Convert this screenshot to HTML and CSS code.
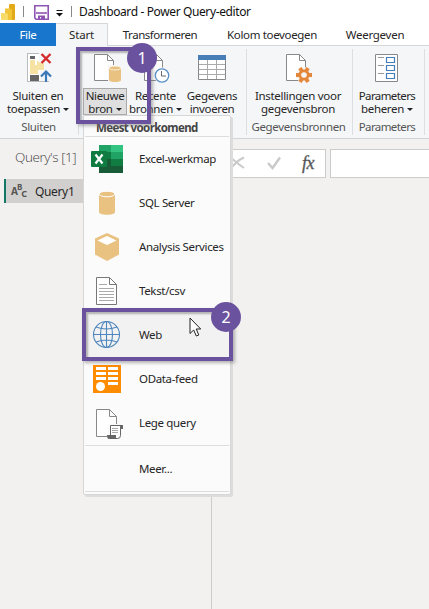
FILE: index.html
```
<!DOCTYPE html>
<html lang="nl">
<head>
<meta charset="utf-8">
<title>Dashboard - Power Query-editor</title>
<link rel="stylesheet" href="styles.css">
</head>
<body>
<div class="app">
  <header class="titlebar">
    <svg class="logo" width="16" height="18" viewBox="0 0 16 18"><rect x="8" y="1" width="6" height="16" rx="1" fill="#e2a918"/><path d="M4 5.500h5q2 0 2 2V17H4z" fill="#f2c437"/><path d="M0 10h5q2 0 2 2v5H1q-1 0-1-1z" fill="#f8dc6a"/></svg>
    <i class="tick"></i>
    <svg class="save" width="15" height="15" viewBox="0 0 15 15"><path d="M.8.8h13.400v13.400H2L.8 13z" fill="#fff" stroke="#8f55b5" stroke-width="1.600"/><path d="M2 8h11" stroke="#8f55b5" stroke-width="1.600"/><path d="M4 10.500h7V14H7v-2H6v2H4z" fill="#8f55b5"/></svg>
    <svg class="quick" width="7" height="7" viewBox="0 0 7 7"><path d="M.5.5h6" stroke="#111"/><path d="M0 3h7L3.500 6.500z" fill="#111"/></svg>
    <i class="tick"></i>
    <span class="apptitle">Dashboard - Power Query-editor</span>
  </header>
  <nav class="tabs">
    <span class="tab file"><b>File</b></span>
    <span class="tab active"><b>Start</b></span>
    <span class="tab transform"><b>Transformeren</b></span>
    <span class="tab column"><b>Kolom toevoegen</b></span>
    <span class="tab view"><b>Weergeven</b></span>
  </nav>
  <section class="ribbon">
    <div class="group g1">
      <div class="buttons">
        <div class="btn b1">
          <svg width="26" height="32" viewBox="0 0 26 32"><rect x="1.500" y="2.500" width="21" height="28" fill="#fff" stroke="#bbb"/><path d="M4 5h5v3H4z" fill="#666"/><path d="M4 9h5v5h9v5h-6v4H4z" fill="#f6e3a4"/><path d="M4 24h9v6H4z" fill="#666"/><path d="M13 1h13v11h-3v18h-9V20h4V12h-5z" fill="#f4f6f8"/><path d="M18 12h-4l-3-3v10h4l3-3z" fill="#f6e3a4"/><path d="M15.500 3l9 9M24.500 3l-9 9" stroke="#d52b2b" stroke-width="2.400"/><path d="M20 31V20.500M15 25.500l5-5 5 5" fill="none" stroke="#3b79b7" stroke-width="2.200"/></svg>
          <span>Sluiten en</span><span>toepassen<i class="caret"></i></span>
        </div>
      </div>
      <div class="caption">Sluiten</div>
    </div>
    <div class="group g2">
      <div class="buttons">
        <div class="btn b2">
          <svg width="26" height="32" viewBox="0 0 26 32"><path d="M2.500 3.500h13l6 6v20h-19z" fill="#fff" stroke="#888"/><path d="M15.500 3.500v6h6" fill="none" stroke="#888"/><path d="M16 14h13v18H16z" fill="#f4f6f8"/><path d="M17 17v12c0 2.800 12 2.800 12 0V17z" fill="#e9c282"/><ellipse cx="23" cy="17" rx="6" ry="2" fill="#e9c282" stroke="#fff" stroke-width=".7"/></svg>
          <div class="split"><span>Nieuwe</span><span>bron<i class="caret"></i></span></div>
        </div>
        <div class="btn b3">
          <svg width="30" height="32" viewBox="0 0 30 32"><path d="M3.500 3.500h12l6 6v20h-18z" fill="#fff" stroke="#888"/><path d="M15.500 3.500v6h6" fill="none" stroke="#888"/><circle cx="21" cy="24.500" r="8" fill="#f4f6f8"/><circle cx="21" cy="24.500" r="6.700" fill="#fff" stroke="#5b8fc5" stroke-width="1.300"/><path d="M20.500 20v5H25" fill="none" stroke="#666"/></svg>
          <span>Recente</span><span>bronnen<i class="caret"></i></span>
        </div>
        <div class="btn b4">
          <svg width="29" height="32" viewBox="0 0 29 32"><path d="M.5 5.500h27v23H.5z" fill="#fff" stroke="#888"/><path d="M0 4h28v5H0z" fill="#477eb7"/><path d="M1 13.500h26M1 18.500h26M1 23.500h26M9.500 9v19M18.500 9v19" stroke="#aaa"/></svg>
          <span>Gegevens</span><span>invoeren</span>
        </div>
      </div>
    </div>
    <div class="group g3">
      <div class="buttons">
        <div class="btn b5">
          <svg width="28" height="32" viewBox="0 0 28 32"><path d="M2.500 3.500h13l6 6v20h-19z" fill="#fff" stroke="#888"/><path d="M15.500 3.500v6h6" fill="none" stroke="#888"/><circle cx="20" cy="24" r="8" fill="#f4f6f8"/><path d="M12 24h16M16 17l8 14M24 17l-8 14" stroke="#e5873a" stroke-width="3.800"/><circle cx="20" cy="24" r="4.200" fill="#f4f6f8" stroke="#e5873a" stroke-width="2.800"/></svg>
          <span>Instellingen voor</span><span>gegevensbron</span>
        </div>
      </div>
      <div class="caption">Gegevensbronnen</div>
    </div>
    <div class="group g4">
      <div class="buttons">
        <div class="btn b6">
          <svg width="23" height="32" viewBox="0 0 23 32"><path d="M.5 3.500h22v27H.5z" fill="#fff" stroke="#888"/><path d="M3 6.500h6M3 14.500h6M3 22.500h6" stroke="#999"/><path d="M11.500 6.500h8v5h-8zM11.500 14.500h8v5h-8zM11.500 22.500h8v5h-8z" fill="#fff" stroke="#477eb7" stroke-width="1.200"/></svg>
          <span class="tight">Parameters</span><span>beheren<i class="caret"></i></span>
        </div>
      </div>
      <div class="caption tight">Parameters</div>
    </div>
  </section>
  <main class="workspace">
    <aside class="queries">
      <h1>Query's [1]</h1>
      <div class="query"><span class="abc"><i>A</i><i class="up">B</i><i class="down">C</i></span><span>Query1</span></div>
    </aside>
    <section class="editor">
      <div class="tools">
        <svg width="18" height="16" viewBox="0 0 18 16"><path d="M2 1c4 3 8 7 14 11M16 1.500C10 4 6 8 2 14" fill="none" stroke="#c9c9c9" stroke-width="1.900"/></svg>
        <svg width="16" height="16" viewBox="0 0 16 16"><path d="M2 7l4.500 5L14 1.500" fill="none" stroke="#c9c9c9" stroke-width="2.400"/></svg>
        <span class="fx">fx</span>
      </div>
      <div class="formula"></div>
    </section>
  </main>
  <div class="menu">
    <div class="menuhead">Meest voorkomend</div>
    <div class="item"><svg width="34" height="30" viewBox="0 0 34 30"><path d="M8 1h24v28H8z" fill="#21a366"/><path d="M20 1h12v7H20z" fill="#33c481"/><path d="M8 8h12v7H8z" fill="#107c41"/><path d="M20 15h12v7H20z" fill="#107c41"/><path d="M8 15h12v7h12v7H8z" fill="#185c37"/><rect y="7" width="16" height="16" rx="1" fill="#107c41"/><path d="M4.500 10.500l7 9M11.500 10.500l-7 9" stroke="#fff" stroke-width="2.200"/></svg><span>Excel-werkmap</span></div>
    <div class="item"><svg width="34" height="30" viewBox="0 0 34 30"><path d="M8 6v18c0 3.700 16 3.700 16 0V6z" fill="#e9c282"/><ellipse cx="16" cy="6" rx="8" ry="2.800" fill="#e9c282" stroke="#fff"/></svg><span>SQL Server</span></div>
    <div class="item"><svg width="34" height="30" viewBox="0 0 34 30"><path d="M16 1l12 5.500v16L16 29 4 22.500v-16z" fill="#e9c282"/><path d="M16 4l9.500 4.500L16 13 6.500 8.500z" fill="#fff"/></svg><span>Analysis Services</span></div>
    <div class="item"><svg width="34" height="30" viewBox="0 0 34 30"><path d="M5.500 1.500h13l7 7v20h-20z" fill="#fff" stroke="#777"/><path d="M18.500 1.500v7h7" fill="none" stroke="#777"/><path d="M8 8.500h8M8 12.500h15M8 15.500h15M8 18.500h15M8 21.500h15M8 24.500h15" stroke="#aaa"/></svg><span>Tekst/csv</span></div>
    <div class="item hover"><svg width="34" height="30" viewBox="0 0 34 30"><g fill="none" stroke="#4e86bd" stroke-width="1.100"><circle cx="15.500" cy="14.500" r="13"/><ellipse cx="15.500" cy="14.500" rx="6" ry="13"/><path d="M2.500 14.500h26M5 7q10.500 4 21 0M5 22q10.500-4 21 0M15.500 1.500v26"/></g></svg><span>Web</span></div>
    <div class="item"><svg width="34" height="30" viewBox="0 0 34 30"><path d="M2 1h28v28H2z" fill="#ff8c00"/><path d="M5 3h10v3H5zM17 3h10v3H17zM5 8h10v3H5zM17 8h10v3H17zM5 13h10v3H5zM17 13h10v3H17zM17 18h10v3H17z" fill="#fff"/><circle cx="9.500" cy="22.500" r="4.500" fill="#fff"/></svg><span>OData-feed</span></div>
    <div class="item"><svg width="34" height="34" viewBox="0 0 34 34"><path d="M5.500 3.500h13l7 7v20h-20z" fill="#fff" stroke="#888"/><path d="M18.500 3.500v7h7" fill="none" stroke="#888"/><path d="M17 18h14v15H16z" fill="#fafafa"/><path d="M19.500 29V19.500h10v10q0 3-3 3h-8" fill="#fff" stroke="#666"/><path d="M28 19h4v4h-2v-3h-2zM16 29h9v4h-7q-2 0-2-4z" fill="#666"/><path d="M21 22.500h6M21 24.500h6M21 26.500h6" stroke="#aaa"/></svg><span>Lege query</span></div>
    <div class="item more"><span>Meer...</span></div>
  </div>
  <div class="mark m1"></div><div class="badge n1">1</div>
  <div class="mark m2"></div><div class="badge n2">2</div>
  <svg class="cursor" width="14" height="21" viewBox="0 0 14 21"><path d="M1 1v15.500l3.700-3.500 2.600 6 2.500-1-2.600-6h4.500z" fill="#fff" stroke="#222"/></svg>
</div>
</body>
</html>
```

FILE: styles.css
```
* { box-sizing: border-box; }
body { margin: 0; }
.app { position: relative; width: 429px; height: 609px; overflow: hidden; background: #f3f1f0; font: 11.500px/13px "Noto Sans", sans-serif; letter-spacing: -.35px; color: #262626; display: flex; flex-direction: column; white-space: nowrap; }
svg { display: block; flex: none; }
.titlebar { height: 23px; background: #fff; display: flex; align-items: center; padding-left: 1px; flex: none; }
.titlebar > * { flex: none; }
.tick { width: 1px; height: 11px; background: #888; margin-left: 6px; }
.save { margin-left: 10px; margin-top: 1px; }
.quick { margin-left: 7px; margin-top: 3px; }
.quick + .tick { margin-left: 8px; }
.apptitle { margin-left: 7px; font-size: 12px; letter-spacing: -.38px; color: #111; }
.tabs { height: 23px; flex: none; background: #fff; display: flex; }
.tab { display: flex; align-items: center; justify-content: center; border-bottom: 1px solid #d5d7d9; flex: none; }
.tab b { font-weight: 400; }
.file { width: 56px; background: #1877cc; color: #fff; border: 0; }
.active { width: 52px; background: #f4f6f8; border: 1px solid #d5d7d9; border-width: 1px 1px 0 0; padding-bottom: 2px; letter-spacing: -.2px; }
.transform { width: 104px; letter-spacing: -.45px; }
.column { width: 120px; }
.view { flex: 1; padding-right: 11px; letter-spacing: -.25px; }
.ribbon { height: 93px; flex: none; background: #f4f6f8; border-bottom: 1px solid #d1d4d6; display: flex; padding: 3px 0; }
.group { border-right: 1px solid #dcdfe1; display: flex; flex-direction: column; justify-content: space-between; align-items: center; flex: none; }
.g1 { width: 79px; }
.g2 { width: 168px; align-items: flex-start; }
.g3 { width: 106px; padding-right: 2px; }
.g4 { width: 72px; padding-right: 3px; }
.buttons { display: flex; padding-top: 2px; }
.btn { display: flex; flex-direction: column; align-items: center; }
.btn svg { margin-bottom: 6px; overflow: visible; }
.b1 { width: 76px; margin-right: 2px; letter-spacing: -.28px; }
.b1 svg { margin-left: 2px; }
.b2 { width: 44px; margin-left: 4px; }
.b2 svg { margin-bottom: 5px; }
.split { width: 44px; height: 27px; background: #dfdfdf; border: 1px solid #aaa; display: flex; flex-direction: column; align-items: center; }
.b3 { width: 57px; }
.b4 { width: 56px; }
.b5 { letter-spacing: -.3px; padding-right: 1px; }
.caret { display: inline-block; border: 3px solid transparent; border-top-color: #222; border-bottom: 0; margin: 0 0 2px 3px; }
.tight { letter-spacing: -.6px; }
.caption { color: #555; height: 15px; }
.g1 .caption { margin-right: 1px; }
.workspace { flex: 1; display: flex; }
.queries { width: 212px; border-right: 1px solid #ccc; padding: 9px 0 0 4px; flex: none; }
h1 { font: 300 13.500px/20px "Open Sans", sans-serif; letter-spacing: -.42px; margin: -1px 0 12px 11px; color: #444; }
.query { height: 24px; background: #d2d0ce; border-left: 2px solid #117865; display: flex; align-items: center; gap: 8px; padding-left: 5px; font-size: 12px; }
.abc { width: 16px; height: 14px; display: flex; align-items: center; letter-spacing: 0; font: bold 10px/12px "Noto Sans", sans-serif; color: #555; }
.abc i { font-style: normal; flex: none; }
.abc .up { margin: -8px 0 0 -1px; font-size: 8px; }
.abc .down { margin: 5px 0 0 -1px; font-size: 9px; }
.editor { flex: 1; display: flex; padding-top: 10px; }
.tools { width: 114px; height: 29px; background: #fff; border: 1px solid #ccc; display: flex; align-items: center; padding-left: 15px; gap: 20px; flex: none; }
.fx { font: italic 18px/20px "Liberation Serif", serif; color: #555; letter-spacing: -.5px; -webkit-text-stroke: .3px #555; margin-bottom: 2px; }
.formula { flex: 1; height: 29px; background: #fff; border: 1px solid #ccc; border-right: 0; margin-left: 4px; }
.menu { position: absolute; left: 83px; top: 115px; width: 148px; height: 380px; background: #fbfbfb; border: 1px solid #d6d6d6; border-radius: 2px; box-shadow: 2px 2px 0 #dedddd; padding: 4px 1px 3px; display: flex; flex-direction: column; }
.menuhead { height: 17px; flex: none; font-weight: 700; border-bottom: 1px solid #ddd; padding-left: 11px; color: #444; line-height: 15px; letter-spacing: -.62px; }
.item { height: 44px; flex: none; display: flex; align-items: center; padding-left: 6px; gap: 14px; }
.item span { margin-bottom: 1px; }
.hover { background: #f2f2f2; }
.more { height: 47px; border-top: 1px solid #ddd; border-bottom: 1px solid #ddd; padding-left: 54px; }
.mark { position: absolute; border: 4px solid #6b529e; box-shadow: 2px 2px 3px #7778, inset 2px 2px 2px #7778; }
.m1 { left: 76px; top: 47px; width: 75px; height: 77px; }
.m2 { left: 82px; top: 308px; width: 151px; height: 53px; }
.badge { position: absolute; width: 30px; height: 30px; border-radius: 50%; background: #6b529e; color: #fff; display: flex; align-items: center; justify-content: center; font: 16px/20px "Noto Sans", sans-serif; }
.n1 { left: 127px; top: 43px; }
.n2 { left: 211px; top: 302px; }
.cursor { position: absolute; left: 189px; top: 317px; }
```
